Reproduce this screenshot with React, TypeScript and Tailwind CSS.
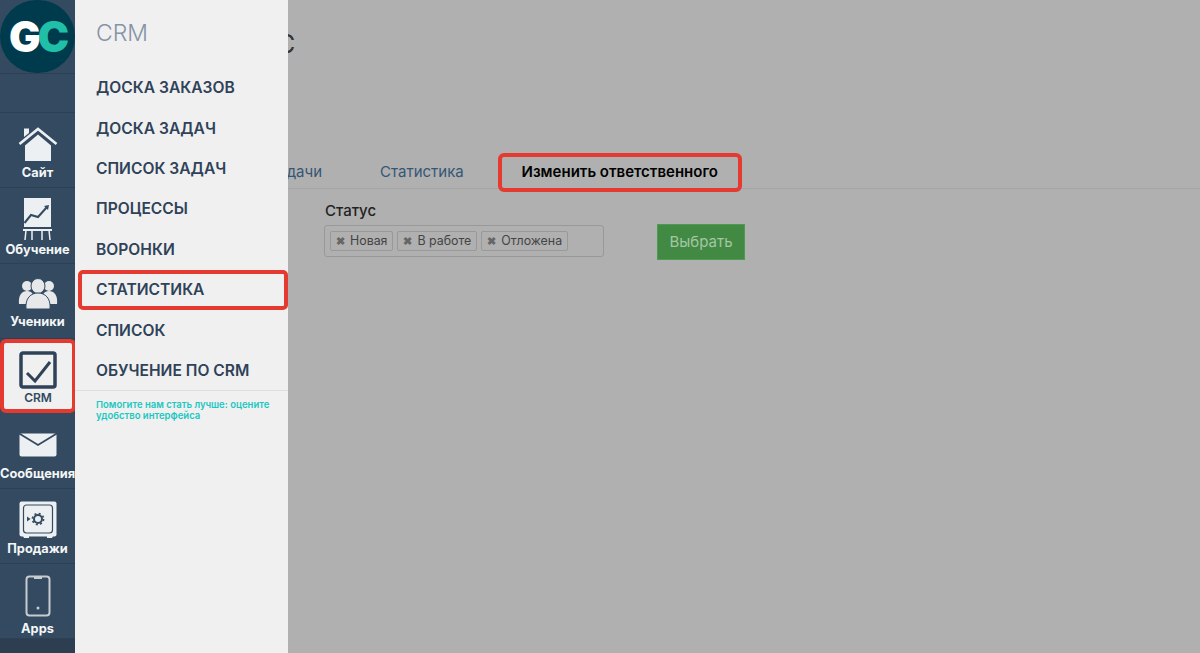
import React from 'react';

const sans = 'font-["Inter","Liberation_Sans",sans-serif]';

const SiteIcon = () => (
    <svg width="40" height="36" viewBox="0 0 40 36">
        <path d="M7 18.5 L20 7.5 L33 18.5 V34 H7 Z" fill="#edf0f2" />
        <path d="M1.5 17 L20 2 L38.5 17" fill="none" stroke="#edf0f2" strokeWidth="2.6" />
        <path d="M6 1.5 H11 V6 L6 10 Z" fill="#edf0f2" />
    </svg>
);

const ChartIcon = () => (
    <svg width="40" height="44" viewBox="0 0 40 44">
        <rect x="6" y="1" width="27" height="29" fill="#edf0f2" />
        <path d="M6.5 26 L13 18 L20 20 L29 10" fill="none" stroke="#334a60" strokeWidth="2" />
        <path d="M26 9 L31 8 L30 13 Z" fill="#334a60" />
        <path d="M5 33 H34" stroke="#edf0f2" strokeWidth="2" />
        <path d="M8 33 L7 43 M14 33 V43 M24 33 V43 M31 33 L32 43" stroke="#edf0f2" strokeWidth="1.5" />
    </svg>
);

const UsersIcon = () => (
    <svg width="40" height="34" viewBox="0 0 40 34">
        <circle cx="9" cy="8" r="5" fill="#e6e8ea" />
        <circle cx="31" cy="8" r="5" fill="#e6e8ea" />
        <path d="M1 26 C0 17 4 13 9 13 C14 13 17 17 17 26 Z" fill="#e6e8ea" />
        <path d="M23 26 C23 17 26 13 31 13 C36 13 40 17 39 26 Z" fill="#e6e8ea" />
        <ellipse cx="20" cy="8" rx="7" ry="7.5" fill="#e6e8ea" stroke="#334a60" />
        <path d="M8 31 C7 20 13 15 20 15 C27 15 33 20 32 31 Z" fill="#e6e8ea" stroke="#334a60" />
    </svg>
);

const CrmIcon = () => (
    <svg width="38" height="38" viewBox="0 0 38 38">
        <rect x="2" y="2" width="34" height="34" rx="2" fill="#f0f0f0" stroke="#2f4258" strokeWidth="3.5" />
        <path d="M8 22 L16 30 L31 11" fill="none" stroke="#2f4258" strokeWidth="3" />
    </svg>
);

const MailIcon = () => (
    <svg width="38" height="24" viewBox="0 0 38 24">
        <rect x="0.5" y="0.5" width="37" height="23" rx="2" fill="#edf0f2" />
        <path d="M1 1 L19 12 L37 1" fill="none" stroke="#334a60" strokeWidth="1.8" />
    </svg>
);

const SafeIcon = () => (
    <svg width="38" height="38" viewBox="0 0 38 38">
        <rect x="0.5" y="0.5" width="37" height="35" rx="2" fill="#edf0f2" />
        <path d="M4 35 H10 V37 H5 Z M28 35 H34 L33 37 H28 Z" fill="#edf0f2" />
        <rect x="4.5" y="4" width="29" height="28" rx="3" fill="none" stroke="#334a60" strokeWidth="1.2" />
        <circle cx="19" cy="18" r="4" fill="none" stroke="#334a60" strokeWidth="2" />
        <circle cx="19" cy="18" r="5.6" fill="none" stroke="#334a60" strokeWidth="1.6" strokeDasharray="2 2.4" />
        <path d="M8 15.5 L11.5 18 L8 20.5 Z" fill="#334a60" />
    </svg>
);

const PhoneIcon = () => (
    <svg width="26" height="42" viewBox="0 0 26 42">
        <rect x="1.5" y="1.5" width="23" height="39" rx="3" fill="none" stroke="#c8ccd0" strokeWidth="2" />
        <path d="M9 2 H17 V4 H9 Z" fill="#c8ccd0" />
        <circle cx="13" cy="33" r="1.5" fill="#c8ccd0" />
    </svg>
);

interface NavItemProps {
    label: string;
    icon: React.ReactNode;
    height: string;
    pad: string;
    iconHeight: string;
    gap: string;
}

const upperItems: NavItemProps[] = [
    { label: 'Сайт', icon: <SiteIcon />, height: 'h-[75px]', pad: 'pt-[14px]', iconHeight: 'h-[36px]', gap: 'mt-[2px]' },
    { label: 'Обучение', icon: <ChartIcon />, height: 'h-[76px]', pad: 'pt-[9px]', iconHeight: 'h-[44px]', gap: 'mt-[1px]' },
    { label: 'Ученики', icon: <UsersIcon />, height: 'h-[75px]', pad: 'pt-[14px]', iconHeight: 'h-[34px]', gap: 'mt-[2px]' },
];

const lowerItems: NavItemProps[] = [
    { label: 'Сообщения', icon: <MailIcon />, height: 'h-[76px]', pad: 'pt-[20px]', iconHeight: 'h-[24px]', gap: 'mt-[9px]' },
    { label: 'Продажи', icon: <SafeIcon />, height: 'h-[75px]', pad: 'pt-[12px]', iconHeight: 'h-[38px]', gap: 'mt-[2px]' },
    { label: 'Apps', icon: <PhoneIcon />, height: 'h-[75px]', pad: 'pt-[11px]', iconHeight: 'h-[42px]', gap: 'mt-[4px]' },
];

const menuItems = ['ДОСКА ЗАКАЗОВ', 'ДОСКА ЗАДАЧ', 'СПИСОК ЗАДАЧ', 'ПРОЦЕССЫ', 'ВОРОНКИ', 'СТАТИСТИКА', 'СПИСОК', 'ОБУЧЕНИЕ ПО CRM'];

const NavItem: React.FC<NavItemProps> = ({ label, icon, height, pad, iconHeight, gap }) => (
    <div className={`flex flex-col items-center border-b border-[#2c4056] ${height} ${pad}`}>
        <div className={`flex items-center justify-center ${iconHeight}`}>{icon}</div>
        <div className={`${gap} text-[12.8px] font-bold leading-[16px] text-[#f4f6f7] whitespace-nowrap`}>{label}</div>
    </div>
);

const Tag: React.FC<{ label: string }> = ({ label }) => (
    <div className="flex h-[20px] items-center gap-[5px] rounded-[2px] border border-[#999] px-[5px] text-[12.4px] text-[#444]">
        <span className="text-[11px] font-bold leading-none text-[#666]">✖</span>
        {label}
    </div>
);

export default function App() {
    return (
        <div className={`flex h-[653px] w-[1200px] overflow-hidden bg-[#b0b0b0] ${sans}`}>
            {/* left icon rail */}
            <div className="relative z-10 flex w-[75px] shrink-0 flex-col bg-[#334a60]">
                <div className="h-[74px] border-b border-[#2c4056]">
                    <div className="flex h-[73px] w-[75px] items-center justify-center rounded-full bg-[#003b4d]">
                        <span className="text-[42px] font-black leading-none tracking-[-3px] text-white">
                            G<span className="text-[#1fbfa8]">C</span>
                        </span>
                    </div>
                </div>
                <div className="h-[39px] border-b border-[#2c4056]" />
                {upperItems.map(item => <NavItem key={item.label} {...item} />)}
                <div className="flex h-[74px] w-[76px] flex-col items-center rounded-[6px] border-[4px] border-[#e53a2f] bg-[#f0f0f0] pt-[8px]">
                    <CrmIcon />
                    <div className="mt-[1px] text-[12px] font-semibold leading-[16px] text-[#334a60]">CRM</div>
                </div>
                {lowerItems.map(item => <NavItem key={item.label} {...item} />)}
                <div className="flex-1 bg-[#2c3e50]" />
            </div>

            {/* opened CRM menu */}
            <div className="relative z-10 flex w-[213px] shrink-0 flex-col bg-[#f0f0f0]">
                <div className="pl-[21px] pt-[19px] text-[23px] font-light leading-[28px] text-[#8593a6]">CRM</div>
                <div className="mt-[20.7px] flex h-[322.3px] flex-col">
                    {menuItems.map(item => (
                        <div key={item} className="relative flex h-[40.4px] shrink-0 items-center pl-[21px] text-[15.6px] font-semibold text-[#2f4258] whitespace-nowrap">
                            {item === 'СТАТИСТИКА' && <div className="absolute left-[3px] top-0 h-[40px] w-[210px] rounded-[5px] border-[4px] border-[#e53a2f]" />}
                            {item}
                        </div>
                    ))}
                </div>
                <div className="border-t border-[#dedede] pl-[21px] pt-[8px] text-[9.5px] font-semibold leading-[11px] text-[#1cc7c1]">
                    Помогите нам стать лучше: оцените<br />удобство интерфейса
                </div>
            </div>

            {/* dimmed page, partly covered by the menu */}
            <div className="min-w-0 flex-1">
                <div className="h-[189px] border-b border-[#a5a5a5]">
                    <div className="-ml-[11px] h-[153px] pt-[29px] text-[25px] leading-[30px] text-[#333]">С</div>
                    <div className="flex h-[38px] items-center">
                        <span className="-ml-[19px] text-[15px] text-[#365675] whitespace-nowrap">Задачи</span>
                        <span className="ml-[58px] text-[15px] text-[#365675] whitespace-nowrap">Статистика</span>
                        <div className="ml-[34px] flex h-[39px] w-[244px] items-center justify-center rounded-[6px] border-[4px] border-[#e53a2f] text-[15px] font-semibold text-black whitespace-nowrap">
                            Изменить ответственного
                        </div>
                    </div>
                </div>
                <div className="flex items-start pl-[36px] pt-[13px]">
                    <div>
                        <div className="pl-[1px] text-[15px] font-medium leading-[18px] text-[#222]">Статус</div>
                        <div className="mt-[5px] flex h-[32px] w-[280px] items-center gap-[4px] rounded-[3px] border border-[#999] pl-[5px]">
                            <Tag label="Новая" />
                            <Tag label="В работе" />
                            <Tag label="Отложена" />
                        </div>
                    </div>
                    <button className="ml-[53px] mt-[22px] h-[36px] w-[88px] border border-[#4f9a50] bg-[#428a43] text-[15px] text-[#a5c6a5]">
                        Выбрать
                    </button>
                </div>
            </div>
        </div>
    );
}
